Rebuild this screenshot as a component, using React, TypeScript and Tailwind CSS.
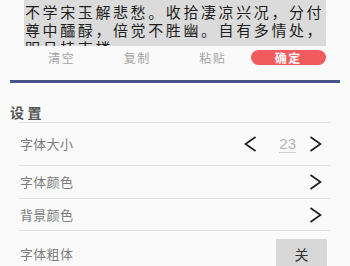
import React from "react";

function Chevron({ dir }: { dir: "left" | "right" }) {
  return (
    <svg width="13" height="16" viewBox="0 0 13 16" className="shrink-0">
      <polyline
        points={dir === "right" ? "1.5,1 11.5,8 1.5,15" : "11.5,1 1.5,8 11.5,15"}
        fill="none"
        stroke="#1a1a1a"
        strokeWidth="1.6"
        strokeLinejoin="miter"
      />
    </svg>
  );
}

export default function App() {
  return (
    <div className="w-[350px] h-[266px] overflow-hidden bg-[#fafafa] font-['Noto_Sans_CJK_SC','Noto_Sans',sans-serif]">
      <div className="mx-6 h-[46px] overflow-hidden bg-[#dbdbdb] pt-[3px] pl-[1px] text-[15px] leading-[18px] tracking-[2.6px] text-[#1e1e1e]">
        <div className="whitespace-nowrap">不学宋玉解悲愁。收拾凄凉兴况，分付</div>
        <div className="whitespace-nowrap">尊中醽醁，倍觉不胜幽。自有多情处，</div>
        <div className="whitespace-nowrap">明月挂南楼。</div>
      </div>
      <div className="mx-6 mt-[4px] grid h-[15px] grid-cols-4 text-[12px] leading-[15px] tracking-[1.5px]">
        <div className="flex items-center justify-center text-[#a3a3a3]">清空</div>
        <div className="flex items-center justify-center text-[#a3a3a3]">复制</div>
        <div className="flex items-center justify-center text-[#a3a3a3]">粘贴</div>
        <div className="flex items-center justify-center rounded-full bg-[#f25b5d] font-bold text-white">确定</div>
      </div>
      <div className="mx-[10px] mt-[15px] h-[3px] bg-[#4c538a]" />
      <div className="flex h-[39px] items-end pl-[10px]">
        <div className="text-[14px] font-bold leading-[20px] tracking-[3.5px] text-[#555555]">设置</div>
      </div>
      <div className="mx-[19px] text-[13px] tracking-[0.3px] text-[#7c7c7c]">
        <div className="flex h-[43px] items-center border-t border-[#e4e4e4] pl-[1px] pr-[9px]">
          <span>字体大小</span>
          <div className="ml-auto flex items-center">
            <Chevron dir="left" />
            <span className="ml-[22px] border-b-[1.5px] border-[#cfcfcf] text-[15px] leading-[16px] tracking-normal text-[#b3b3b3] font-['Liberation_Sans',sans-serif]">
              23
            </span>
            <span className="ml-[13px]">
              <Chevron dir="right" />
            </span>
          </div>
        </div>
        <div className="flex h-[33px] items-center border-t border-[#e4e4e4] pl-[1px] pr-[9px]">
          <span>字体颜色</span>
          <span className="ml-auto">
            <Chevron dir="right" />
          </span>
        </div>
        <div className="flex h-[32px] items-center border-t border-[#e4e4e4] pl-[1px] pr-[9px]">
          <span>背景颜色</span>
          <span className="ml-auto">
            <Chevron dir="right" />
          </span>
        </div>
        <div className="flex h-[40px] items-start border-t border-[#e4e4e4] pl-[1px] pr-[4px] pt-[8px]">
          <span className="leading-[30px]">字体粗体</span>
          <div className="ml-auto flex h-[30px] w-[51px] items-center justify-center bg-[#d8d8d8] text-[14px] tracking-normal text-[#333333]">
            关
          </div>
        </div>
      </div>
    </div>
  );
}
